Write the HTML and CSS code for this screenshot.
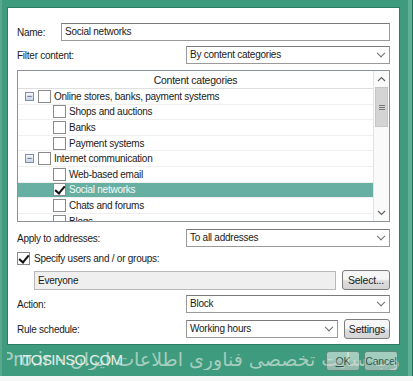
FILE: index.html
```html
<!DOCTYPE html>
<html lang="en">
<head>
  <meta charset="UTF-8" />
  <title>Rule</title>
  <link rel="stylesheet" href="styles.css">
</head>
<body>
  <div class="frame">
    <div class="panel">

      <div class="row row-name">
        <label class="lbl lbl-short">Name:</label>
        <div class="input">Social networks</div>
      </div>

      <div class="row row-filter">
        <label class="lbl">Filter content:</label>
        <div class="select">By content categories<span class="chev"></span></div>
      </div>

      <!-- Categories list -->
      <div class="list">
        <div class="list-body">
          <div class="list-head">Content categories</div>
          <div class="item lvl0"><span class="tog">−</span><span class="cb"></span>Online stores, banks, payment systems</div>
          <div class="item lvl1"><span class="cb"></span>Shops and auctions</div>
          <div class="item lvl1"><span class="cb"></span>Banks</div>
          <div class="item lvl1"><span class="cb"></span>Payment systems</div>
          <div class="item lvl0"><span class="tog">−</span><span class="cb"></span>Internet communication</div>
          <div class="item lvl1"><span class="cb"></span>Web-based email</div>
          <div class="item lvl1 selected"><span class="cb on"></span>Social networks</div>
          <div class="item lvl1"><span class="cb"></span>Chats and forums</div>
          <div class="item lvl1"><span class="cb"></span>Blogs</div>
        </div>
        <div class="scrollbar">
          <div class="sb-btn">
            <svg width="9" height="6" viewBox="0 0 9 6"><path d="M1 5 L4.5 1.5 L8 5" fill="none" stroke="#606060" stroke-width="1.1"/></svg>
          </div>
          <div class="sb-thumb"><span></span><span></span><span></span></div>
          <div class="sb-track"></div>
          <div class="sb-btn">
            <svg width="9" height="6" viewBox="0 0 9 6"><path d="M1 1 L4.5 4.5 L8 1" fill="none" stroke="#606060" stroke-width="1.1"/></svg>
          </div>
        </div>
      </div>

      <div class="row row-apply">
        <label class="lbl">Apply to addresses:</label>
        <div class="select">To all addresses<span class="chev"></span></div>
      </div>

      <div class="row row-check">
        <span class="cb on"></span>
        <label>Specify users and / or groups:</label>
      </div>

      <div class="row row-users">
        <div class="input gray">Everyone</div>
        <button class="btn btn-select">Select...</button>
      </div>

      <div class="row row-action">
        <label class="lbl">Action:</label>
        <div class="select">Block<span class="chev"></span></div>
      </div>

      <div class="row row-schedule">
        <label class="lbl">Rule schedule:</label>
        <div class="select">Working hours<span class="chev"></span></div>
        <button class="btn btn-settings">Settings</button>
      </div>

    </div>

    <div class="footer">
      <div class="wm-fa" dir="rtl">وب سایت تخصصی فناوری اطلاعات ایران - ITPro.ir</div>
      <div class="wm-en">ITOSINSO.COM</div>
      <div class="footer-btns">
        <button class="btn ghost"><u>O</u>K</button>
        <button class="btn ghost">Cancel</button>
      </div>
    </div>
  </div>
</body>
</html>
```

FILE: styles.css
```css
* { box-sizing: border-box; }

body {
  margin: 0;
  width: 413px;
  height: 381px;
  overflow: hidden;
  background: #f4f7f6;
  font-family: "Liberation Sans", Arial, sans-serif;
  font-size: 10px;
  letter-spacing: -0.25px;
  color: #1a1a1a;
}

.frame {
  height: 376px;
  background: #3f9b7d;
  padding: 7px 12px 0 7px;
  border-right: 1px solid #1f6d55;
  box-shadow: inset -4px 0 0 #5fb095, inset 2px 0 0 #57a88c;
}

.panel {
  background: #fff;
  height: 338px;
  padding: 15px 9px 0 9px;
  border: 1px solid #2d7d63;
}

.row {
  display: flex;
  align-items: center;
}

.lbl {
  width: 169px;
  flex: none;
}

.lbl-short { width: 44px; }

.input, .select {
  height: 18px;
  line-height: 16px;
  border: 1px solid #9a9a9a;
  border-top-color: #7a7a7a;
  padding: 0 3px;
  flex: 1;
  position: relative;
  background: #fff;
}

.input.gray {
  background: #efefef;
  border-color: #b8b8b8;
  height: 19px;
  line-height: 17px;
}

.chev {
  position: absolute;
  right: 5px;
  top: 6px;
  width: 6px;
  height: 6px;
  border-right: 1.5px solid #6a6a6a;
  border-bottom: 1.5px solid #6a6a6a;
  transform: rotate(45deg) translate(-2px, -2px);
}

.row-name { margin-top: 0; }
.row-filter { margin-top: 5px; }

/* list */
.list {
  margin-top: 6px;
  height: 152px;
  border: 1px solid #8d9199;
  display: flex;
  overflow: hidden;
}

.list-body {
  flex: 1;
  overflow: hidden;
}

.list-head {
  height: 18px;
  line-height: 18px;
  text-align: center;
  border-bottom: 1px solid #dedede;
  font-size: 10.5px;
}

.item {
  height: 15.6px;
  display: flex;
  align-items: center;
  border-bottom: 1px solid #efefef;
  white-space: nowrap;
}

.lvl0 { padding-left: 7px; }
.lvl1 { padding-left: 35px; }

.item.selected {
  background: #67aea3;
  color: #f4fbf9;
}

.tog {
  width: 9px;
  height: 9px;
  border: 1px solid #7b8fb0;
  background: linear-gradient(#f4f7fb, #c9d4e6);
  font-size: 9px;
  line-height: 6px;
  text-align: center;
  color: #2b3c66;
  margin-right: 4px;
  letter-spacing: 0;
}

.cb {
  width: 13px;
  height: 13px;
  border: 1px solid #8a8a8a;
  background: #fff;
  margin-right: 3px;
  flex: none;
  position: relative;
}

.cb.on::after {
  content: "";
  position: absolute;
  left: 3px;
  top: 0px;
  width: 4px;
  height: 8px;
  border-right: 2px solid #111;
  border-bottom: 2px solid #111;
  transform: rotate(40deg);
}

.scrollbar {
  width: 16px;
  flex: none;
  border-left: 1px solid #e3e3e3;
  background: #fafafa;
  display: flex;
  flex-direction: column;
}

.sb-btn {
  height: 16px;
  display: flex;
  align-items: center;
  justify-content: center;
  flex: none;
}

.sb-thumb {
  height: 40px;
  margin: 0 1px;
  background: #d4d4d4;
  border: 1px solid #c6c6c6;
  display: flex;
  flex-direction: column;
  justify-content: center;
  align-items: center;
  gap: 1px;
}

.sb-thumb span {
  width: 6px;
  height: 1px;
  background: #777;
}

.sb-track { flex: 1; }

.row-apply { margin-top: 7px; }
.row-check { margin-top: 5px; gap: 4px; }
.row-check .cb { margin-right: 0; }

.row-users {
  margin-top: 5px;
  padding-left: 17px;
}

.btn {
  height: 20px;
  padding: 0 5px;
  border: 1px solid #7c7c7c;
  border-radius: 3px;
  background: linear-gradient(#f6f6f6 45%, #dddddd 55%, #d4d4d4);
  font-family: inherit;
  font-size: 10.5px;
  letter-spacing: -0.2px;
  color: #1a1a1a;
}

.btn-select { margin-left: 6px; width: 48px; padding: 0; }
.btn-settings { margin-left: 6px; width: 46px; padding: 0; }

.row-action { margin-top: 5px; }
.row-schedule { margin-top: 6px; }

/* bottom watermark area */
.footer {
  position: relative;
  height: 31px;
}

.wm-fa {
  position: absolute;
  left: 0;
  right: 0;
  top: 3px;
  font-family: "DejaVu Sans", sans-serif;
  font-size: 19px;
  letter-spacing: 0;
  color: #b9d6ca;
  white-space: nowrap;
  overflow: hidden;
  text-align: right;
  opacity: 0.85;
}

.wm-en {
  position: absolute;
  left: 12px;
  top: 6px;
  font-size: 15px;
  color: #e4eee9;
  letter-spacing: -0.6px;
}

.footer-btns {
  position: absolute;
  right: 2px;
  top: 6px;
  display: flex;
  gap: 4px;
}

.btn.ghost {
  opacity: 0.55;
  width: 34px;
  padding: 0;
}
```
